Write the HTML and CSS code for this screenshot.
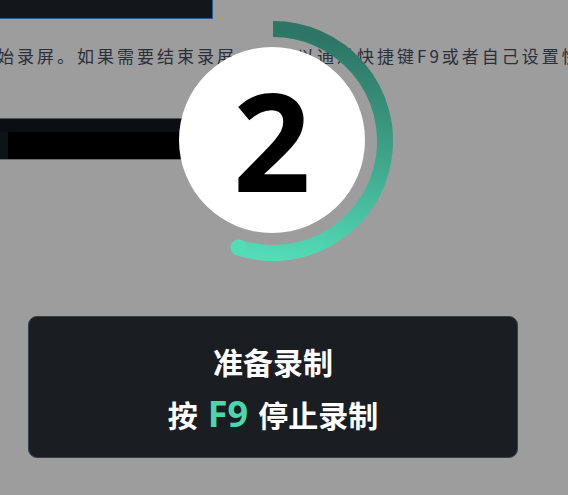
FILE: index.html
```html
<!DOCTYPE html>
<html lang="zh-CN">
<head>
<meta charset="utf-8">
<title>准备录制</title>
<link rel="stylesheet" href="styles.css">
</head>
<body>
<div class="page">
  <div class="topbar"></div>
  <p class="para">始录屏。如果需要结束录屏，您可以通过快捷键F9或者自己设置快</p>
  <div class="darkbar"><span class="darkbar-icon"></span></div>
  <div class="card">
    <div class="card-title">准备录制</div>
    <div class="card-hint">按 <span class="key">F9</span> 停止录制</div>
  </div>
</div>
<div class="countdown">
  <svg class="ring" width="260" height="260" viewBox="143 11 260 260" aria-hidden="true">
    <defs>
      <linearGradient id="ringGrad" gradientUnits="userSpaceOnUse" x1="273" y1="29" x2="238" y2="252">
        <stop offset="0" stop-color="#2d7564"/>
        <stop offset="0.5" stop-color="#3fa68b"/>
        <stop offset="1" stop-color="#53dcb6"/>
      </linearGradient>
    </defs>
    <path d="M273 29 A112 112 0 1 1 238.4 247.5" fill="none" stroke="url(#ringGrad)" stroke-width="16" stroke-linecap="butt"/>
    <circle cx="238.4" cy="247.5" r="8" fill="#53dcb6"/>
  </svg>
  <div class="face"><span class="digit">2</span></div>
</div>
</body>
</html>
```
FILE: styles.css
```css
html, body {
  margin: 0;
  padding: 0;
}
body {
  width: 568px;
  height: 495px;
  overflow: hidden;
  background: #9d9d9d;
  position: relative;
  font-family: "Noto Sans CJK SC", "Noto Sans", sans-serif;
}
.page {
  display: flex;
  flex-direction: column;
}
.topbar {
  width: 212px;
  height: 18px;
  background: #13161b;
  border-right: 1px solid #1f5f99;
  border-bottom: 1px solid #1f5f99;
}
.para {
  margin: 27px 0 0 -3px;
  width: 571px;
  overflow: hidden;
  font-size: 17px;
  line-height: 20px;
  letter-spacing: 3px;
  color: #29303a;
  white-space: nowrap;
}
.darkbar {
  margin-top: 52px;
  width: 200px;
  height: 40px;
  border-top: 1px solid #4f5256;
  border-bottom: 1px solid #6b6d70;
  background: linear-gradient(to bottom, #0b0e12 0, #0b0e12 13px, #000 13px);
  position: relative;
}
.darkbar-icon {
  position: absolute;
  left: 0;
  top: 13px;
  width: 8px;
  height: 27px;
  background: #0b1417;
}
.card {
  margin: 156px 0 0 28px;
  width: 488px;
  height: 140px;
  border: 1px solid #3a3d42;
  border-radius: 9px;
  background: #1a1d21;
  display: flex;
  flex-direction: column;
  align-items: center;
  justify-content: center;
  gap: 13px;
  color: #ffffff;
  font-weight: 700;
}
.card-title {
  font-size: 30px;
  line-height: 40px;
}
.card-hint {
  font-size: 30px;
  line-height: 40px;
  display: flex;
  align-items: center;
  gap: 10px;
}
.key {
  font-family: "Noto Sans", sans-serif;
  font-size: 36px;
  color: #4cd6ac;
  line-height: 40px;
}
.countdown {
  position: absolute;
  left: 143px;
  top: 11px;
  width: 260px;
  height: 260px;
}
.ring {
  position: absolute;
  left: 0;
  top: 0;
}
.face {
  position: absolute;
  left: 36px;
  top: 36px;
  width: 186px;
  height: 186px;
  border-radius: 50%;
  background: #ffffff;
  display: flex;
  align-items: center;
  justify-content: center;
}
.digit {
  font-family: "Noto Sans", sans-serif;
  font-weight: 700;
  font-size: 136px;
  line-height: 136px;
  color: #000;
}
```
